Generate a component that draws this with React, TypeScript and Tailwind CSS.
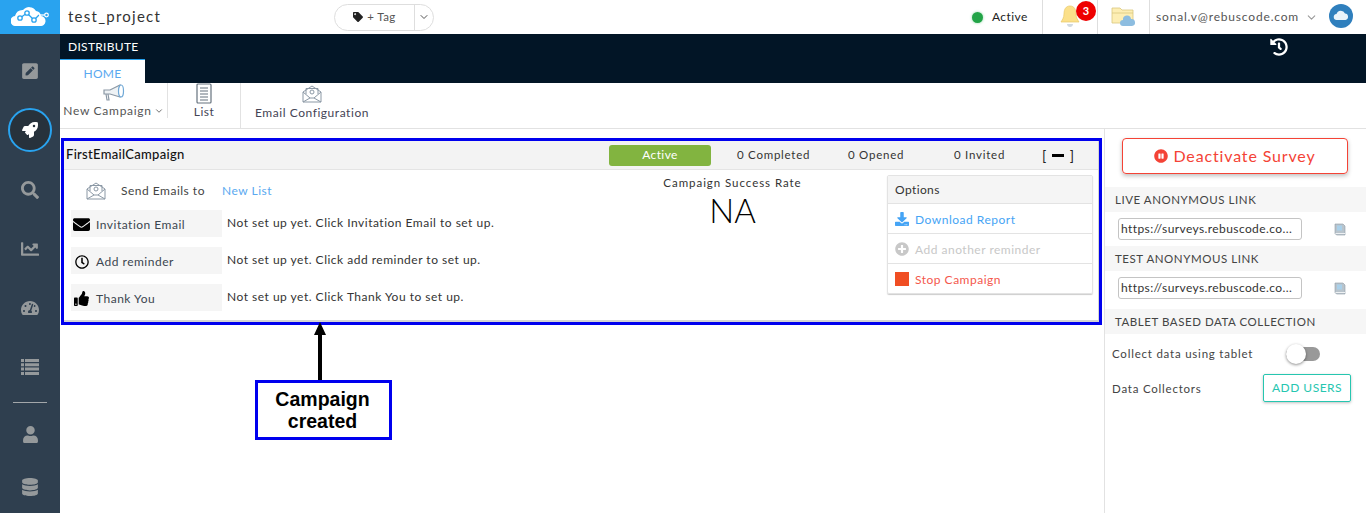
import React from "react";
import {
  FaChartLine,
  FaDatabase,
  FaDownload,
  FaEnvelope,
  FaHistory,
  FaPauseCircle,
  FaPenSquare,
  FaPlusCircle,
  FaRegClock,
  FaRocket,
  FaSearch,
  FaTachometerAlt,
  FaTag,
  FaThumbsUp,
  FaUser,
} from "react-icons/fa";
import { FiChevronDown } from "react-icons/fi";

const LogoCloud = () => (
  <svg width="38" height="20" viewBox="0 0 38 20">
    <path d="M5 20a5 5 0 0 1-1-10 8 8 0 0 1 8-6 8 8 0 0 1 13 1 6 6 0 0 1 5 5 5 5 0 0 1-1 10z" fill="#fff" />
    <g fill="#fff" stroke="#29a3ef" strokeWidth="1.3">
      <path d="M9 12l7-5 7 7 5-5" fill="none" />
      <circle cx="9" cy="12" r="2.200" />
      <circle cx="16" cy="7" r="2.200" />
      <circle cx="23" cy="14" r="2.200" />
    </g>
    <path d="M28 9h7" stroke="#fff" strokeWidth="1.300" />
    <circle cx="35.500" cy="9" r="1.800" fill="#29a3ef" stroke="#fff" strokeWidth="1.200" />
  </svg>
);

const MailOpen = ({ className }: { className?: string }) => (
  <svg className={className} width="20" height="18" viewBox="0 0 20 18" fill="none" stroke="#8b98a5" strokeWidth="1">
    <path d="M1 7v10h18V7L10 1z" fill="#fff" />
    <path d="M4 9V3.500h12V9" />
    <path d="M1 7l7 6h4l7-6M1 17l7-4M19 17l-7-4" />
    <circle cx="10" cy="7" r="2" />
  </svg>
);

const Megaphone = () => (
  <svg className="shrink-0" width="22" height="18" viewBox="0 0 22 18" fill="none" stroke="#8b98a5" strokeWidth="1.2">
    <path d="M1 6h6l10-5v12L7 10H1z" fill="#eef2f5" />
    <ellipse cx="18" cy="7" rx="2.500" ry="6" stroke="#6fa8d6" fill="#fff" />
    <path d="M3 10l1 6h2l-1-6" />
  </svg>
);

const ListDoc = () => (
  <svg className="shrink-0" width="16" height="21" viewBox="0 0 16 21" fill="none" stroke="#66727e" strokeWidth="1.2">
    <rect x="1" y="1" width="14" height="19" rx="1" />
    <path d="M4 5h8M4 8h8M4 11h8M4 14h8M4 17h8" />
  </svg>
);

const RowsIcon = () => (
  <svg width="18" height="16" viewBox="0 0 18 16" fill="currentColor">
    <path d="M0 0h3v3H0zM4 0h14v3H4zM0 4.300h3v3H0zM4 4.300h14v3H4zM0 8.600h3v3H0zM4 8.600h14v3H4zM0 13h3v3H0zM4 13h14v3H4z" />
  </svg>
);

const Bell = () => (
  <svg width="20" height="24" viewBox="0 0 20 24">
    <path d="M10 1c4 0 6 3 6 8 0 4 2 6 3 8H1c1-2 3-4 3-8 0-5 2-8 6-8z" fill="#fbe08a" stroke="#e8c765" strokeWidth="0.7" />
    <path d="M7 19h6c0 2-1.500 3-3 3s-3-1-3-3z" fill="#cfd8e0" />
  </svg>
);

const FolderCloud = () => (
  <svg width="25" height="24" viewBox="0 0 25 24">
    <path d="M1 3h8l2 2h11v13H1z" fill="#fdeeb4" stroke="#d9c67e" strokeWidth="0.8" />
    <path d="M1 8h21" stroke="#d9c67e" strokeWidth="0.8" />
    <path d="M12 21a3 3 0 0 1 0-6 4 4 0 0 1 8-1 3.500 3.500 0 0 1 1 7z" fill="#8dbde0" />
  </svg>
);

const Avatar = () => (
  <div className="flex h-6 w-6 items-center justify-center rounded-full bg-[#2f7fbd]">
    <svg width="16" height="11" viewBox="0 0 16 11">
      <path d="M4 10a3 3 0 0 1-.5-6A4.500 4.500 0 0 1 12 3.500 3.300 3.300 0 0 1 12.500 10z" fill="#eaf3fa" />
    </svg>
  </div>
);

const CopyIcon = () => (
  <svg width="12" height="13" viewBox="0 0 12 13">
    <path d="M1 1h8l2 2v9H2.500L1 10.500z" fill="#b9c4cc" stroke="#8f9ba4" strokeWidth="0.6" />
    <rect x="3" y="2.500" width="5" height="5" fill="#a9d0ea" />
    <path d="M1.500 10.500H11" stroke="#eef1f3" />
  </svg>
);

const SideIcon = ({ children }: { children: React.ReactNode }) => (
  <div className="flex h-[59px] items-center justify-center text-[18px] text-[#95999b]">{children}</div>
);

const SetupRow = ({ icon, label, text }: { icon: React.ReactNode; label: string; text: string }) => (
  <div className="flex h-[27px] items-center">
    <div className="flex h-[27px] w-[151px] items-center gap-[5px] bg-[#f5f5f5] pl-[1px] pt-[2px] text-[12px] tracking-[0.5px] text-[#3c4650]">
      <span className="flex w-[19px] justify-center text-black">{icon}</span>
      {label}
    </div>
    <span className="mb-[2px] ml-[5px] text-[12px] tracking-[0.5px] text-[#333]">{text}</span>
  </div>
);

const OptionRow = ({ icon, label, color }: { icon: React.ReactNode; label: string; color: string }) => (
  <div className={`flex h-[30px] items-center gap-[6px] border-t border-[#e3e3e3] pl-[7px] pt-[3px] text-[12px] tracking-[0.5px] ${color}`}>
    <span className="mb-[2px] flex w-[14px] justify-center text-[14px]">{icon}</span>
    {label}
  </div>
);

const LinkSection = ({ title }: { title: string }) => (
  <div>
    <div className="flex h-[25px] items-center bg-[#f6f6f6] pl-[10px] text-[11.5px] tracking-[0.55px] text-[#444]">{title}</div>
    <div className="flex h-[34px] items-center pl-[13px]">
      <div className="flex h-[22px] w-[184px] items-center rounded-[3px] border border-[#c4c4c4] pl-[2px] text-[12px] tracking-[0.4px] text-[#333]">
        https://surveys.rebuscode.co...
      </div>
      <span className="ml-[32px]">
        <CopyIcon />
      </span>
    </div>
  </div>
);

export default function App() {
  return (
    <div className="flex h-[513px] w-[1366px] overflow-hidden bg-white font-['Lato','Noto_Sans',sans-serif]">
      {/* SIDEBAR */}
      <aside className="flex w-[60px] shrink-0 flex-col overflow-hidden bg-[#2f3f4f]">
        <div className="flex h-[34px] shrink-0 items-center justify-center bg-[#29a3ef] pb-[3px]">
          <LogoCloud />
        </div>
        <div className="flex h-[73px] shrink-0 items-center justify-center text-[#95999b]">
          <FaPenSquare className="text-[18px]" />
        </div>
        <div className="flex h-[46px] shrink-0 items-center justify-center">
          <div className="flex h-[44px] w-[44px] items-center justify-center rounded-full border-2 border-[#29a3ef] bg-[#27323c] text-[16px] text-white">
            <FaRocket />
          </div>
        </div>
        <div className="mt-[7px] flex flex-col">
          <SideIcon>
            <FaSearch />
          </SideIcon>
          <SideIcon>
            <FaChartLine />
          </SideIcon>
          <SideIcon>
            <FaTachometerAlt />
          </SideIcon>
          <SideIcon>
            <RowsIcon />
          </SideIcon>
        </div>
        <div className="mx-[13px] mb-[5px] mt-[6px] h-px bg-[#a3a7aa]" />
        <SideIcon>
          <FaUser className="text-[17px]" />
        </SideIcon>
        <SideIcon>
          <FaDatabase />
        </SideIcon>
      </aside>

      <div className="flex min-w-0 flex-1 flex-col">
        {/* TOP BAR */}
        <header className="flex h-[34px] shrink-0 items-center pl-2">
          <span className="w-[266px] pb-[2px] text-[15px] tracking-[1.25px] text-[#333]">test_project</span>
          <div className="flex h-[27px] w-[100px] items-center rounded-full border border-[#dedede] text-[#555]">
            <div className="flex w-[79px] items-center justify-center gap-1 text-[11.5px] tracking-[0.4px]">
              <FaTag className="text-[10px] text-[#222]" />
              + Tag
            </div>
            <div className="flex h-full flex-1 items-center justify-center border-l border-[#dedede]">
              <FiChevronDown className="text-[12px]" />
            </div>
          </div>
          <div className="ml-auto flex h-full items-center">
            <span className="h-[11px] w-[11px] rounded-full bg-[#22a447] shadow-[0_0_3px_#8fd6a5]" />
            <span className="ml-[9px] w-[50px] text-[12px] tracking-[0.4px] text-[#222]">Active</span>
            <div className="relative flex h-full w-[55px] items-center justify-center border-l border-[#dedede]">
              <Bell />
              <span className="absolute left-[33px] top-px flex h-[20px] w-[20px] items-center justify-center rounded-full bg-[#ee0000] text-[11px] font-bold text-white">
                3
              </span>
            </div>
            <div className="flex h-full w-[53px] items-center justify-center border-x border-[#dedede]">
              <FolderCloud />
            </div>
            <span className="ml-[6px] w-[143px] text-[12px] tracking-[0.82px] text-[#555]">sonal.v@rebuscode.com</span>
            <FiChevronDown className="ml-[6px] text-[13px] text-[#999]" />
            <span className="mb-[3px] ml-[11px] mr-[13px]">
              <Avatar />
            </span>
          </div>
        </header>

        {/* DISTRIBUTE BAND */}
        <div className="flex h-[49px] shrink-0 flex-col bg-[#021526]">
          <div className="flex h-[25px] items-center justify-between pl-2 pr-[78px]">
            <span className="text-[12px] tracking-[0.3px] text-white">DISTRIBUTE</span>
            <FaHistory className="text-[18px] text-white" />
          </div>
          <div className="flex h-[24px] w-[85px] items-center justify-center border-t border-[#29a3ef] bg-white pt-[5px] text-[12px] tracking-[0.3px] text-[#5aa9f0]">
            HOME
          </div>
        </div>

        {/* TOOLBAR */}
        <div className="flex h-[46px] shrink-0 border-b border-[#e2e2e2]">
          <div className="flex h-[35px] w-[108px] flex-col items-center border-r border-[#e2e2e2] pt-[1px] text-[#555]">
            <Megaphone />
            <div className="flex items-center text-[12px] tracking-[0.72px]">
              New Campaign
              <FiChevronDown className="ml-[2px] text-[10px]" />
            </div>
          </div>
          <div className="flex w-[73px] flex-col items-center border-r border-[#e2e2e2] text-[#445]">
            <ListDoc />
            <span className="-mt-px text-[12px] tracking-[0.5px]">List</span>
          </div>
          <div className="flex flex-col items-center pl-[14px] pt-[2px] text-[#445]">
            <MailOpen />
            <span className="mt-[1px] text-[12px] tracking-[0.55px]">Email Configuration</span>
          </div>
        </div>

        {/* MAIN */}
        <div className="flex min-h-0 flex-1">
          <main className="w-[1044px] shrink-0 pl-px pt-[9px]">
            <div className="h-[187px] w-[1041px] border-[3px] border-[#0000ee] bg-white">
              <div className="h-[181px] w-[1035px] border-b-2 border-r border-[#d4d4d4]">
                <div className="flex h-[29px] items-center border-b border-[#e4e4e4] bg-[#f3f3f3] pl-[2px]">
                  <span className="w-[543px] text-[13px] font-medium tracking-[0.3px] text-[#111]">FirstEmailCampaign</span>
                  <span className="flex h-[21px] w-[102px] items-center justify-center rounded-[3px] bg-[#82b440] text-[12px] tracking-[0.4px] text-white">
                    Active
                  </span>
                  <div className="flex text-[11.5px] tracking-[0.75px] text-[#333]">
                    <span className="ml-[26px] w-[111px]">0 Completed</span>
                    <span className="w-[106px]">0 Opened</span>
                    <span className="w-[88px]">0 Invited</span>
                  </div>
                  <span className="flex w-[32px] items-center justify-between text-[14px] text-[#222]">
                    [<span className="h-[3px] w-[12px] bg-black" />]
                  </span>
                </div>
                <div className="flex">
                  <div className="w-[535px] pl-[7px]">
                    <div className="flex h-[40px] items-center pt-[1px]">
                      <MailOpen className="ml-[15px]" />
                      <span className="ml-[15px] w-[101px] text-[12px] tracking-[0.5px] text-[#444]">Send Emails to</span>
                      <span className="text-[12px] tracking-[0.5px] text-[#5aa9f0]">New List</span>
                    </div>
                    <div className="flex flex-col gap-[10px]">
                      <SetupRow icon={<FaEnvelope className="text-[17px]" />} label="Invitation Email" text="Not set up yet. Click Invitation Email to set up." />
                      <SetupRow icon={<FaRegClock className="text-[14px]" />} label="Add reminder" text="Not set up yet. Click add reminder to set up." />
                      <SetupRow icon={<FaThumbsUp className="text-[15px]" />} label="Thank You" text="Not set up yet. Click Thank You to set up." />
                    </div>
                  </div>
                  <div className="flex w-[267px] flex-col items-center pt-[4px] text-[#333]">
                    <span className="text-[11.5px] tracking-[0.95px]">Campaign Success Rate</span>
                    <span className="text-[33px] font-light leading-[38px] text-black">NA</span>
                  </div>
                  <div className="ml-[21px] mt-[5px] h-[119px] w-[206px] rounded-[2px] border border-[#e3e3e3] shadow-[0_1px_1px_#ccc]">
                    <div className="flex h-[27px] items-center bg-[#f5f5f5] pl-[7px] text-[12px] tracking-[0.4px] text-[#333]">Options</div>
                    <OptionRow icon={<FaDownload />} label="Download Report" color="text-[#45a4f5]" />
                    <OptionRow icon={<FaPlusCircle />} label="Add another reminder" color="text-[#c8c8c8]" />
                    <OptionRow icon={<span className="block h-[14px] w-[14px] bg-[#f04e23]" />} label="Stop Campaign" color="text-[#f4574c]" />
                  </div>
                </div>
              </div>
            </div>

            {/* ANNOTATION */}
            <div className="ml-[194px] flex w-[137px] flex-col">
              <svg className="-mt-[3px] ml-[59px]" width="12" height="58" viewBox="0 0 12 58">
                <path d="M6 0L12 13H8V58H4V13H0z" fill="#000" />
              </svg>
              <div className="flex h-[60px] w-[137px] items-center justify-center border-[3px] border-[#0000ee] pr-[2px] text-center font-['Liberation_Sans',sans-serif] text-[19.500px] font-bold leading-[22px] text-black">
                Campaign
                <br />
                created
              </div>
            </div>
          </main>

          {/* RIGHT PANEL */}
          <aside className="flex-1 border-l border-[#e2e2e2]">
            <div className="mx-[17px] mt-[9px] flex h-[36px] w-[226px] items-center justify-center gap-[5px] rounded-[4px] border border-[#f44336] text-[16px] tracking-[0.85px] text-[#f44336] shadow-[0_2px_4px_rgba(0,0,0,0.25)]">
              <FaPauseCircle className="text-[14px]" />
              Deactivate Survey
            </div>
            <div className="mt-[13px]">
              <LinkSection title="LIVE ANONYMOUS LINK" />
              <LinkSection title="TEST ANONYMOUS LINK" />
            </div>
            <div className="mt-[4px] flex h-[25px] items-center bg-[#f6f6f6] pl-[10px] text-[11.5px] tracking-[0.55px] text-[#444]">
              TABLET BASED DATA COLLECTION
            </div>
            <div className="mt-[9px] flex h-[22px] items-center pl-[7px] pr-[46px]">
              <span className="text-[11.5px] tracking-[0.78px] text-[#444]">Collect data using tablet</span>
              <div className="ml-auto flex h-[14px] w-[34px] items-center rounded-full bg-[#999]">
                <span className="h-[20px] w-[20px] rounded-full bg-white shadow-[0_1px_3px_rgba(0,0,0,0.45)]" />
              </div>
            </div>
            <div className="mt-[9px] flex h-[28px] items-center justify-between pl-[7px] pr-[15px]">
              <span className="mt-[2px] text-[11.5px] tracking-[0.78px] text-[#444]">Data Collectors</span>
              <span className="flex h-[28px] w-[88px] items-center justify-center rounded-[2px] border border-[#26c6b0] text-[12px] tracking-[0.5px] text-[#26c6b0] shadow-[0_1px_3px_rgba(0,0,0,0.25)]">
                ADD USERS
              </span>
            </div>
          </aside>
        </div>
      </div>
    </div>
  );
}
